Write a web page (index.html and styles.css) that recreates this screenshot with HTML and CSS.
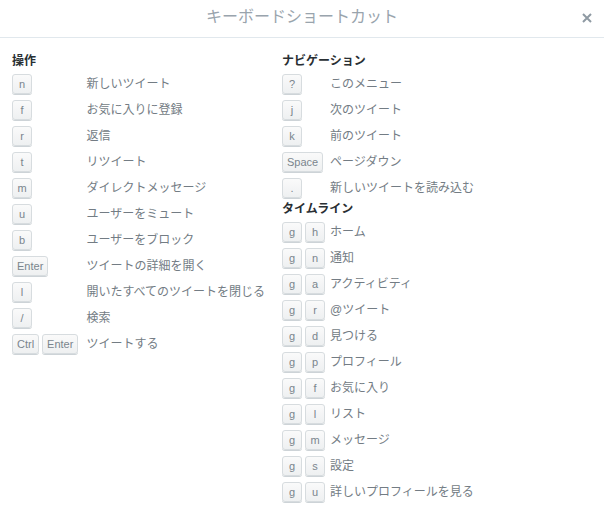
FILE: index.html
```html
<!DOCTYPE html>
<html lang="ja">
<head>
    <meta charset="UTF-8">
    <title>キーボードショートカット</title>
    <link rel="stylesheet" href="styles.css">
</head>
<body>
    <div class="modal">
        <div class="modal-header">
            <h2>キーボードショートカット</h2>
            <span class="close">
                <svg width="10" height="10" viewBox="0 0 10 10"><path d="M1 1L9 9M9 1L1 9" stroke="#8f9aa3" stroke-width="2"/></svg>
            </span>
        </div>
        <div class="modal-body">
            <div class="column left">
                <h3>操作</h3>
                <div class="keys"><kbd>n</kbd></div><div class="desc">新しいツイート</div>
                <div class="keys"><kbd>f</kbd></div><div class="desc">お気に入りに登録</div>
                <div class="keys"><kbd>r</kbd></div><div class="desc">返信</div>
                <div class="keys"><kbd>t</kbd></div><div class="desc">リツイート</div>
                <div class="keys"><kbd>m</kbd></div><div class="desc">ダイレクトメッセージ</div>
                <div class="keys"><kbd>u</kbd></div><div class="desc">ユーザーをミュート</div>
                <div class="keys"><kbd>b</kbd></div><div class="desc">ユーザーをブロック</div>
                <div class="keys"><kbd>Enter</kbd></div><div class="desc">ツイートの詳細を開く</div>
                <div class="keys"><kbd>l</kbd></div><div class="desc">開いたすべてのツイートを閉じる</div>
                <div class="keys"><kbd>/</kbd></div><div class="desc">検索</div>
                <div class="keys"><kbd>Ctrl</kbd><kbd>Enter</kbd></div><div class="desc">ツイートする</div>
            </div>
            <div class="column right">
                <h3>ナビゲーション</h3>
                <div class="keys"><kbd>?</kbd></div><div class="desc">このメニュー</div>
                <div class="keys"><kbd>j</kbd></div><div class="desc">次のツイート</div>
                <div class="keys"><kbd>k</kbd></div><div class="desc">前のツイート</div>
                <div class="keys"><kbd>Space</kbd></div><div class="desc">ページダウン</div>
                <div class="keys"><kbd>.</kbd></div><div class="desc">新しいツイートを読み込む</div>
                <h3 class="sub">タイムライン</h3>
                <div class="keys"><kbd>g</kbd><kbd>h</kbd></div><div class="desc">ホーム</div>
                <div class="keys"><kbd>g</kbd><kbd>n</kbd></div><div class="desc">通知</div>
                <div class="keys"><kbd>g</kbd><kbd>a</kbd></div><div class="desc">アクティビティ</div>
                <div class="keys"><kbd>g</kbd><kbd>r</kbd></div><div class="desc">@ツイート</div>
                <div class="keys"><kbd>g</kbd><kbd>d</kbd></div><div class="desc">見つける</div>
                <div class="keys"><kbd>g</kbd><kbd>p</kbd></div><div class="desc">プロフィール</div>
                <div class="keys"><kbd>g</kbd><kbd>f</kbd></div><div class="desc">お気に入り</div>
                <div class="keys"><kbd>g</kbd><kbd>l</kbd></div><div class="desc">リスト</div>
                <div class="keys"><kbd>g</kbd><kbd>m</kbd></div><div class="desc">メッセージ</div>
                <div class="keys"><kbd>g</kbd><kbd>s</kbd></div><div class="desc">設定</div>
                <div class="keys"><kbd>g</kbd><kbd>u</kbd></div><div class="desc">詳しいプロフィールを見る</div>
            </div>
        </div>
    </div>
</body>
</html>
```

FILE: styles.css
```css
* {
    margin: 0;
    padding: 0;
    box-sizing: border-box;
}
body {
    background-color: #fff;
    font-family: "Liberation Sans", "Noto Sans CJK JP", sans-serif;
    color: #66757f;
}
.modal {
    width: 604px;
}
.modal-header {
    height: 38px;
    border-bottom: 1px solid #e1e8ed;
    display: flex;
    justify-content: center;
    align-items: center;
    position: relative;
}
.modal-header h2 {
    font-size: 16px;
    font-weight: normal;
    color: #99a4ad;
    line-height: 20px;
    margin-top: -3px;
}
.close {
    position: absolute;
    right: 12px;
    top: 13px;
    width: 10px;
    height: 10px;
    display: flex;
}
.modal-body {
    display: grid;
    grid-template-columns: 270px 1fr;
    padding: 14px 12px 0;
}
.column {
    display: grid;
    grid-template-columns: auto 1fr;
    column-gap: 8px;
    align-content: start;
}
.column.right {
    column-gap: 5px;
}
.column h3 {
    grid-column: 1 / 3;
    font-size: 12px;
    font-weight: bold;
    color: #292f33;
    line-height: 18px;
    margin-bottom: 4px;
}
.column h3.sub {
    margin-top: -4px;
    margin-bottom: 4px;
}
.keys {
    display: flex;
    gap: 3px;
    height: 26px;
}
kbd {
    display: inline-block;
    min-width: 20px;
    height: 20px;
    padding: 0 4px;
    font-family: "Liberation Sans", sans-serif;
    font-size: 11px;
    line-height: 18px;
    text-align: center;
    color: #7a858d;
    background: linear-gradient(#fafafa, #eef0f1);
    border: 1px solid #d7dcdf;
    border-radius: 3px;
    box-shadow: 0 1px 0 #cdd3d7;
}
.desc {
    font-size: 12px;
    line-height: 20px;
    height: 26px;
    color: #737c84;
    white-space: nowrap;
}
```
